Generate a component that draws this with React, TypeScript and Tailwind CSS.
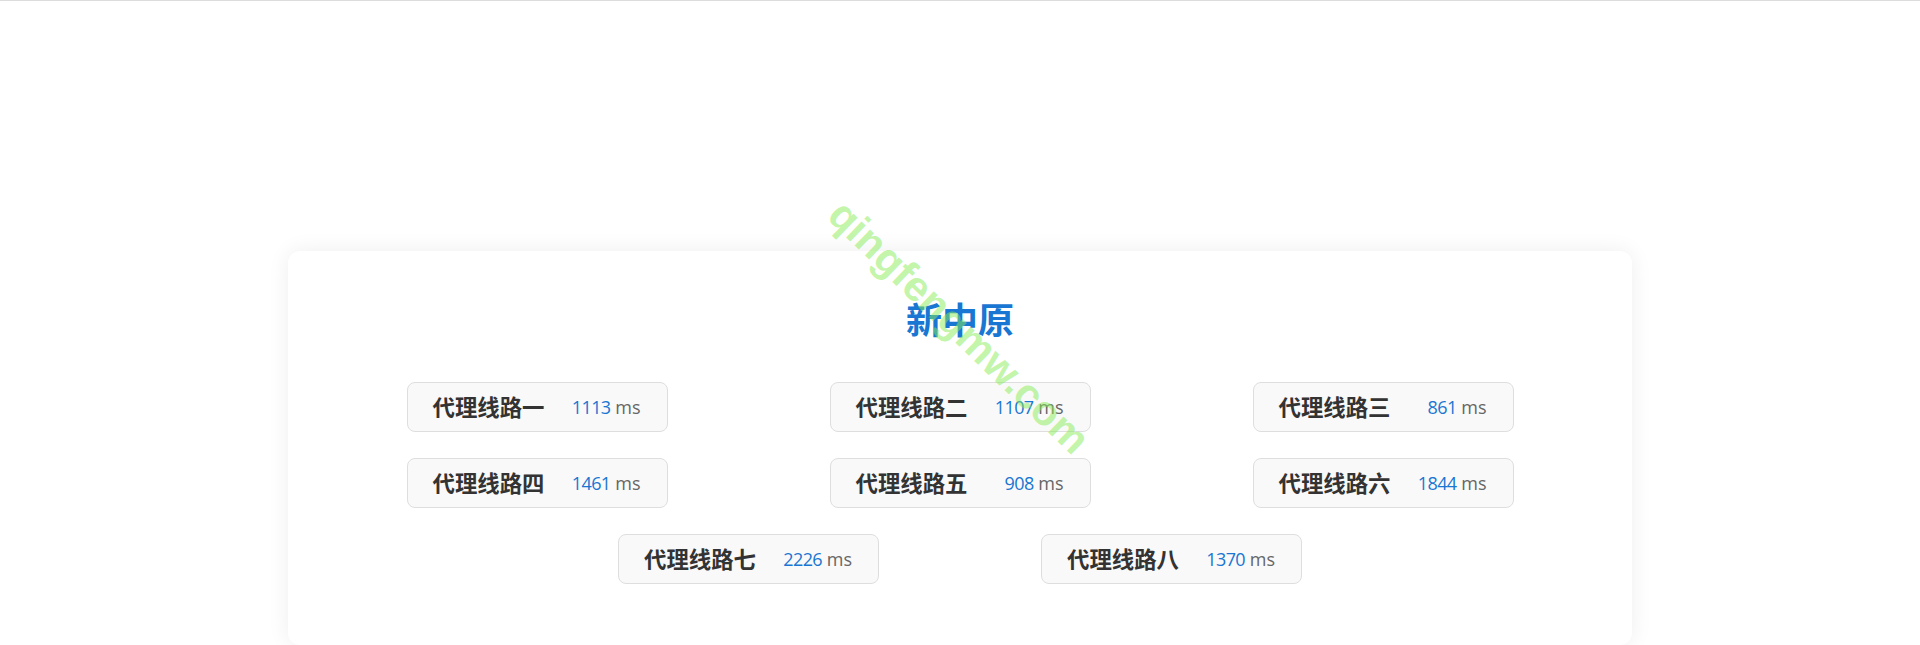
import React from "react";

const lines: { name: string; ms: number }[] = [
  { name: "代理线路一", ms: 1113 },
  { name: "代理线路二", ms: 1107 },
  { name: "代理线路三", ms: 861 },
  { name: "代理线路四", ms: 1461 },
  { name: "代理线路五", ms: 908 },
  { name: "代理线路六", ms: 1844 },
  { name: "代理线路七", ms: 2226 },
  { name: "代理线路八", ms: 1370 },
];

export default function App() {
  return (
    <div
      className="relative min-h-[645px] w-full overflow-hidden bg-white border-t border-[#dcdcdc]"
      style={{ fontFamily: '"Open Sans", "Noto Sans CJK SC", sans-serif' }}
    >
      <div className="pt-[250px]">
        <div className="mx-auto w-[1344px] rounded-[12px] bg-white pt-[40px] pb-[61px] shadow-[0_0_22px_rgba(0,0,0,0.07)]">
          <h1
            className="text-center text-[36px] leading-[54px] font-bold text-[#1976d2]"
            style={{ fontFamily: '"Noto Sans CJK SC", sans-serif' }}
          >
            新中原
          </h1>
          <div className="mt-[37px] flex flex-wrap justify-center gap-x-[162px] gap-y-[26px]">
            {lines.map((l) => (
              <div
                key={l.name}
                className="flex h-[50px] w-[261px] items-center justify-between rounded-lg border border-[#dedede] bg-[#f9f9f9] pl-[25px] pr-[26px]"
              >
                <span
                  className="text-[22.4px] font-bold text-[#333333]"
                  style={{ fontFamily: '"Noto Sans CJK SC", sans-serif' }}
                >
                  {l.name}
                </span>
                <span className="text-[18px] text-[#666666]">
                  <span className="tracking-[-0.6px] text-[#1976d2]">{l.ms}</span> ms
                </span>
              </div>
            ))}
          </div>
        </div>
      </div>
      <div
        className="pointer-events-none absolute left-[959px] top-[326px] whitespace-nowrap text-[42px] font-bold leading-none text-[rgba(135,235,85,0.5)]"
        style={{
          fontFamily: '"Liberation Sans", Arial, sans-serif',
          transform: "translate(-50%, -50%) rotate(44deg)",
        }}
      >
        qingfengmw.com
      </div>
    </div>
  );
}
